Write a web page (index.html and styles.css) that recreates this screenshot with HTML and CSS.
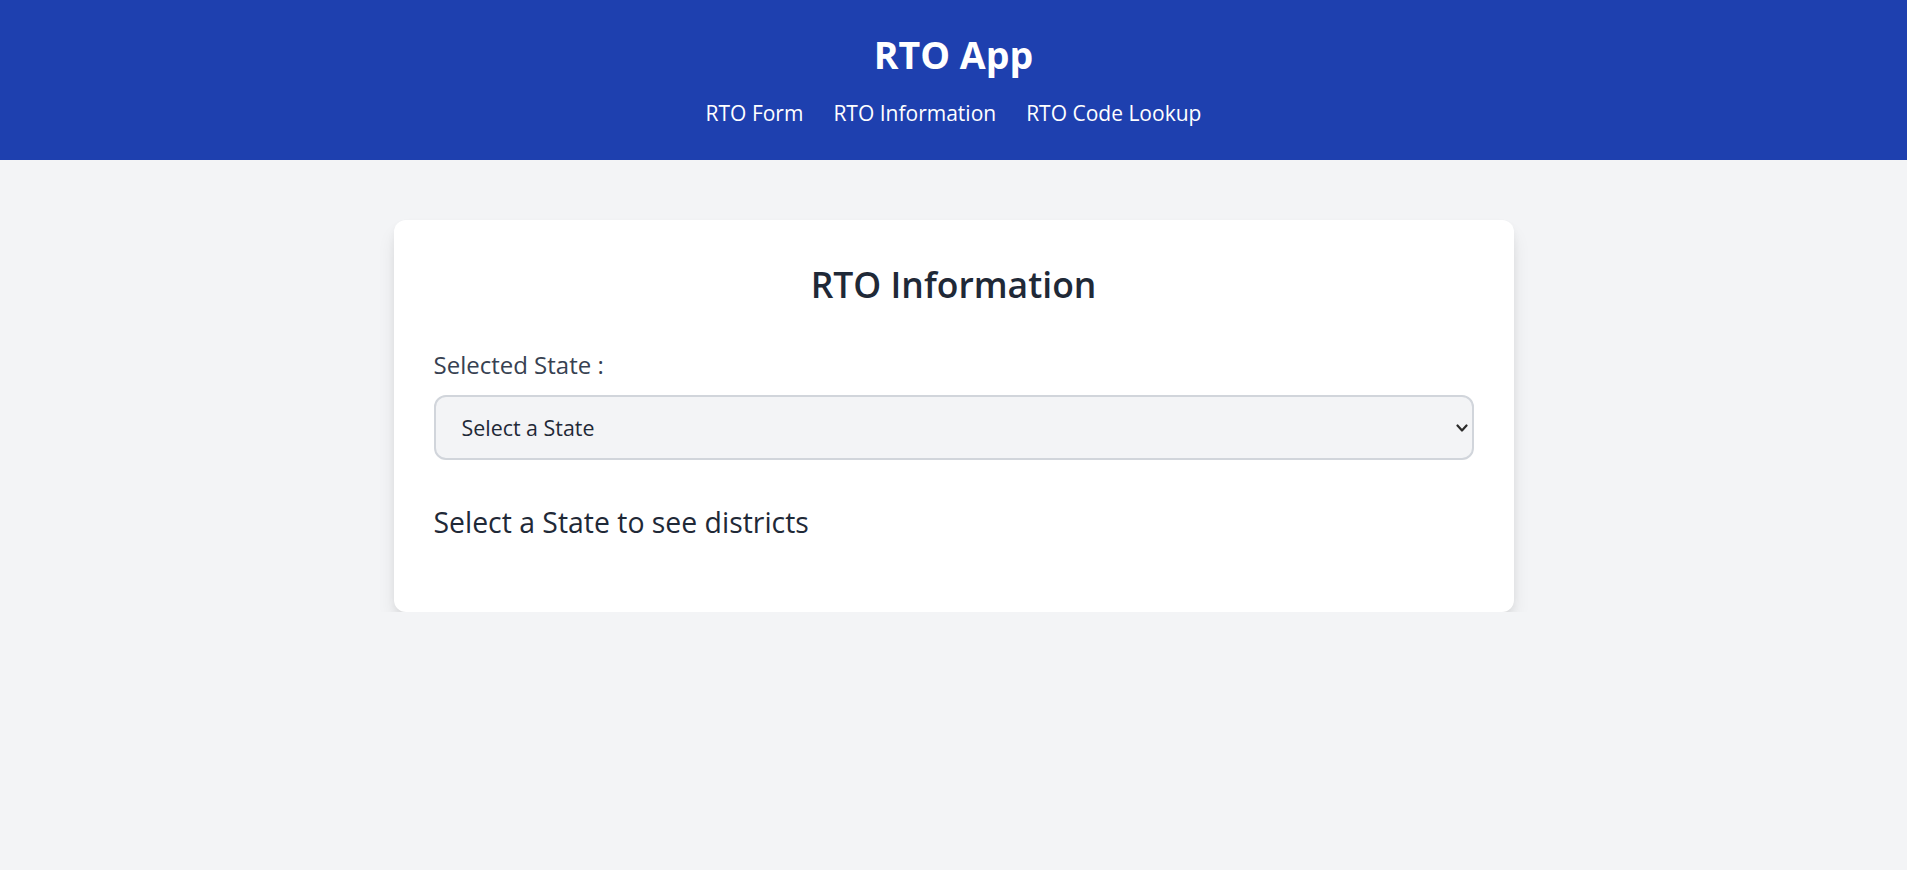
FILE: index.html
```html
<!DOCTYPE html>
<html lang="en">
<head>
<meta charset="utf-8">
<title>RTO App</title>
<link rel="stylesheet" href="styles.css">
</head>
<body>
<header class="topbar">
  <h1 class="app-title">RTO App</h1>
  <nav class="nav">
    <a class="nav-link" href="#">RTO Form</a>
    <a class="nav-link" href="#">RTO Information</a>
    <a class="nav-link" href="#">RTO Code Lookup</a>
  </nav>
</header>
<main class="main">
  <section class="card">
    <h2 class="card-title">RTO Information</h2>
    <label class="field-label" for="state">Selected State :</label>
    <div class="select-wrap">
      <select id="state" class="state-select">
        <option>Select a State</option>
      </select>
      <svg class="chevron" width="12" height="8" viewBox="0 0 12 8" aria-hidden="true">
        <path d="M1.5 1.5 L6 6.5 L10.5 1.5" fill="none" stroke="#2b2b2b" stroke-width="2.2" stroke-linecap="round" stroke-linejoin="round"/>
      </svg>
    </div>
    <p class="hint">Select a State to see districts</p>
  </section>
</main>
</body>
</html>
```

FILE: styles.css
```css
* { box-sizing: border-box; }
html, body { margin: 0; padding: 0; }
body {
  background: #f3f4f6;
  font-family: "Open Sans", "Noto Sans", sans-serif;
  color: #1f2937;
}
.topbar {
  background: #1e40af;
  color: #ffffff;
  padding: 32px 0 30px;
  text-align: center;
  height: 160px;
}
.app-title {
  margin: 0 0 21px;
  font-size: 37.5px;
  line-height: 45px;
  font-weight: 700;
}
.nav {
  display: flex;
  justify-content: center;
  gap: 30px;
  line-height: 30px;
}
.nav-link {
  color: #ffffff;
  text-decoration: none;
  font-size: 21px;
}
.main {
  display: flex;
  justify-content: center;
  padding-top: 60px;
}
.card {
  width: 1120px;
  background: #ffffff;
  border-radius: 12px;
  box-shadow: 0 12px 20px -3px rgba(0,0,0,0.11), 0 4px 10px -2px rgba(0,0,0,0.07);
  padding: 42px 40px 50px;
  height: 392px;
}
.card-title {
  margin: 0 0 40px;
  text-align: center;
  font-size: 35.5px;
  line-height: 45px;
  font-weight: 600;
  color: #1f2937;
}
.field-label {
  display: block;
  font-size: 24px;
  line-height: 35px;
  color: #374151;
  margin-bottom: 13px;
}
.select-wrap {
  position: relative;
}
.state-select {
  -webkit-appearance: none;
  appearance: none;
  width: 100%;
  height: 65px;
  border: 2px solid #d1d5db;
  border-radius: 12px;
  background: #f3f4f6;
  padding: 0 26px;
  font-family: inherit;
  font-size: 21.4px;
  color: #1f2937;
}
.chevron {
  position: absolute;
  right: 6px;
  top: 29px;
}
.hint {
  margin: 45px 0 0;
  font-size: 28.4px;
  line-height: 35px;
  color: #1f2937;
}
```
